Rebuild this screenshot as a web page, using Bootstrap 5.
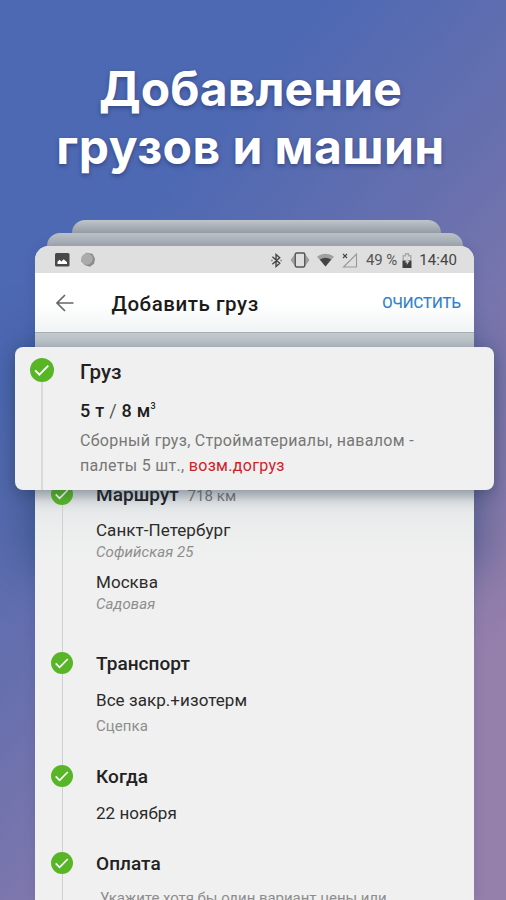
<!DOCTYPE html>
<html lang="ru">
<head>
<meta charset="utf-8">
<meta name="viewport" content="width=device-width, initial-scale=1">
<title>Добавление грузов и машин</title>
<link href="https://cdn.jsdelivr.net/npm/bootstrap@5.3.0/dist/css/bootstrap.min.css" rel="stylesheet">
<style>
html,body{height:900px;overflow:hidden}
body{font-family:Roboto,"Noto Sans",sans-serif;color:#222}
.promo{height:900px;background:linear-gradient(131deg,#4e69b3 0,#4e69b3 26%,#6870ae 48%,#8078ad 64%,#957fab 82%)}
.promo::before{content:"";position:absolute;left:45px;top:360px;width:416px;height:190px;box-shadow:0 0 45px 20px rgba(35,70,115,.55)}
.headline{font:700 48px/58px Inter,sans-serif;padding-top:60px;height:220px;margin:0;text-shadow:0 2px 4px rgba(20,35,90,.5)}
.headline span{display:block}
.headline .l1{letter-spacing:.1px;padding-right:5px}
.headline .l2{letter-spacing:.45px;padding-right:5px}
.sheet-a,.sheet-b{height:13px;border-radius:16px 16px 0 0;background:linear-gradient(#bfc5cb,#959ca6)}
.sheet-a{width:369px;margin-left:72px}
.sheet-b{width:416px;margin-left:47px;background:linear-gradient(#b9c0c6,#a3aab2)}
.phone{width:439px;height:654px;margin-left:34.5px;border-radius:14px 14px 0 0;background:#f0f0f0;box-shadow:0 0 12px rgba(30,50,110,.15)}
.statusbar{height:27px;background:#dfdfdf;border-radius:14px 14px 0 0;font-size:15px;line-height:27px;color:#555;padding:1px 16.5px 0 20.5px}
.statusbar svg{display:block;flex:none}
.pct{margin-left:8px;letter-spacing:-.1px}
.batt{margin-left:5px}
.wifi{margin-left:7px}
.clock{margin-left:7px;color:#444;letter-spacing:.1px}
.appbar{height:60px;background:linear-gradient(#fff 50%,#f1f4f5);border-bottom:1.5px solid #a6afb4;padding:0 12.5px 0 20px}
.appbar h1{font-size:20.5px;font-weight:500;line-height:60px;margin:2px 0 0 37px;color:#1b1b1b;letter-spacing:.55px}
.clear-btn{font-size:15px;line-height:58px;color:#2b7fc9;text-decoration:none;-webkit-text-stroke:.2px #2b7fc9}
.steps{height:567px;padding-top:149.5px;overflow:hidden;background:linear-gradient(#c3cacf 0,#bac1c6 14px,#abb3b8 20px,#c9ced1 155px,#e2e5e7 170px,#ebeded 190px,#f0f0f0 225px)}
.step{padding-left:16.5px}
.rail{width:22px;flex:none}
.rail svg{display:block;width:22px;height:22px}
.line{width:1px;flex:1;background:#cfcfcf}
.step-body{margin-left:23px}
.s-route{height:169.5px}.s-car{height:113px}.s-when{height:87px}.s-pay{height:120px}
.step h2{font-size:19px;font-weight:500;line-height:24px;margin:0;color:#222;letter-spacing:.05px}
.step p{margin:0;font-size:17px;line-height:24px;color:#2b2b2b;letter-spacing:.06px}
.step .sub{font-size:15px;line-height:20px;color:#8d8d8d;letter-spacing:.08px}
.step .hint{letter-spacing:-.05px}
.step .km{font-size:15px;color:#777;font-weight:400;margin-left:4px}
.s-route p:first-of-type{margin-top:10px}
.float-card{left:15px;top:347px;width:479px;height:143px;border-radius:8px;background:#f0f0f0;box-shadow:0 4px 16px rgba(30,50,75,.42);padding:0 0 0 15px}
.float-card .rail{width:24px;padding-top:11px}
.float-card .rail svg{width:24px;height:24px}
.float-card .line{width:2px;background:#dadada}
.cargo{margin-left:26px;font-size:16px;line-height:25px;color:#777}
.cargo h2{font-size:20.5px;font-weight:500;line-height:26px;margin:12px 0 0;color:#222}
.cargo .load{font-size:18px;font-weight:500;line-height:24px;margin:14px 0 5px;color:#1d1d1d;letter-spacing:.25px}
.cargo .load i{font-weight:400;font-style:normal;color:#555}
.cargo .load b{font-size:9px;font-weight:500;position:relative;top:-8px;line-height:0}
.cargo .desc{letter-spacing:.3px}
.cargo .extra{color:#d0202a}
</style>
</head>
<body>
<svg class="d-none"><symbol id="ok" viewBox="0 0 22 22"><circle cx="11" cy="11" r="11" fill="#57b526"/><path d="M4.7 11.3l3.9 4 8.2-8.3" fill="none" stroke="#fff" stroke-width="1.7"/></symbol></svg>
<main class="promo position-relative overflow-hidden">
<h1 class="headline text-white text-center"><span class="l1">Добавление</span><span class="l2">грузов и машин</span></h1>
<div class="sheet-a"></div>
<div class="sheet-b"></div>
<section class="phone position-relative">
  <div class="statusbar d-flex align-items-center">
    <svg width="15" height="14" viewBox="0 0 15 14"><rect width="14.5" height="13.5" rx="1.5" fill="#484848"/><path d="M2.5 11V8.8l2-2 2 1.8 2.2-2.3 3.3 3V11z" fill="#fff"/></svg>
    <svg class="ms-2" width="20" height="16" viewBox="0 0 20 16"><path d="M4.500 4l4-3.200 6 1 2.500 5-1 5-4 3-5-1.500L3 9z" fill="#8b8b8b"/><circle cx="9" cy="7" r="5.800" fill="#ababab"/></svg>
    <div class="ms-auto d-flex align-items-center">
      <svg width="11" height="15" viewBox="0 0 12 16"><path d="M1.500 4l8 7-4 3.500v-13l4 3.500-8 7M.5 8h1M10.500 8h1" fill="none" stroke="#444" stroke-width="1.500"/></svg>
      <svg class="ms-2" width="20" height="16" viewBox="0 0 20 16"><path d="M4.500 2.500L.5 8l4 5.500zM15.500 2.500l4 5.500-4 5.500z" fill="#a0a0a0"/><rect x="5.200" y="1" width="9.600" height="14" rx="1.400" fill="#dfdfdf" stroke="#555" stroke-width="1.500"/></svg>
      <svg class="wifi" width="17" height="14" viewBox="0 0 18 14"><path d="M0 3.500Q9-3 18 3.500L9 14z" fill="#a0a0a0"/><path d="M3 6.500q6-4 12 0L9 14z" fill="#444"/></svg>
      <svg class="ms-2" width="16" height="15" viewBox="0 0 16 15"><path d="M14.500 1v13h-13z" fill="none" stroke="#999" stroke-width="1.100"/><path d="M1 1l4 4M5 1L1 5" stroke="#444" stroke-width="1.100"/></svg>
      <span class="pct">49 %</span>
      <svg class="batt" width="10" height="15" viewBox="0 0 10 15"><path d="M1.200 7.500V2.800h2.300V.8h3v2h2.300v4.700" fill="none" stroke="#aaa" stroke-width="1.400"/><path d="M.5 7.500h9V15h-9z" fill="#3f3f3f"/><path d="M6 4L3 9.500h1.800V12L7.500 8H6z" fill="#ccc"/></svg>
      <span class="clock">14:40</span>
    </div>
  </div>
  <header class="appbar d-flex align-items-center">
    <svg width="20" height="18" viewBox="0 0 20 18"><path d="M18.500 9H2.500M10 1L2 9l8 8" fill="none" stroke="#666" stroke-width="1.700"/></svg>
    <h1>Добавить груз</h1>
    <a class="clear-btn ms-auto" href="#">ОЧИСТИТЬ</a>
  </header>
  <div class="steps">
    <article class="step s-route d-flex">
      <div class="rail d-flex flex-column align-items-center"><svg><use href="#ok"/></svg><div class="line"></div></div>
      <div class="step-body"><h2>Маршрут <span class="km">718 км</span></h2>
        <p>Санкт-Петербург</p><p class="sub fst-italic">Софийская 25</p>
        <p class="mt-2">Москва</p><p class="sub fst-italic">Садовая</p></div>
    </article>
    <article class="step s-car d-flex">
      <div class="rail d-flex flex-column align-items-center"><svg><use href="#ok"/></svg><div class="line"></div></div>
      <div class="step-body"><h2>Транспорт</h2><p class="mt-2 pt-1">Все закр.+изотерм</p><p class="sub mt-1">Сцепка</p></div>
    </article>
    <article class="step s-when d-flex">
      <div class="rail d-flex flex-column align-items-center"><svg><use href="#ok"/></svg><div class="line"></div></div>
      <div class="step-body"><h2>Когда</h2><p class="mt-2 pt-1">22 ноября</p></div>
    </article>
    <article class="step s-pay d-flex">
      <div class="rail d-flex flex-column align-items-center"><svg><use href="#ok"/></svg><div class="line"></div></div>
      <div class="step-body"><h2>Оплата</h2><p class="sub hint mt-2 pt-1 ps-1">Укажите хотя бы один вариант цены или</p></div>
    </article>
  </div>
</section>
<section class="float-card position-absolute d-flex">
  <div class="rail d-flex flex-column align-items-center"><svg><use href="#ok"/></svg><div class="line"></div></div>
  <div class="cargo"><h2>Груз</h2><div class="load">5 т <i>/</i> 8 м<b>3</b></div>
    <div class="desc">Сборный груз, Стройматериалы, навалом -</div><div class="desc">палеты 5 шт., <span class="extra">возм.догруз</span></div></div>
</section>
</main>
<script src="https://cdn.jsdelivr.net/npm/bootstrap@5.3.0/dist/js/bootstrap.bundle.min.js"></script>
</body>
</html>
